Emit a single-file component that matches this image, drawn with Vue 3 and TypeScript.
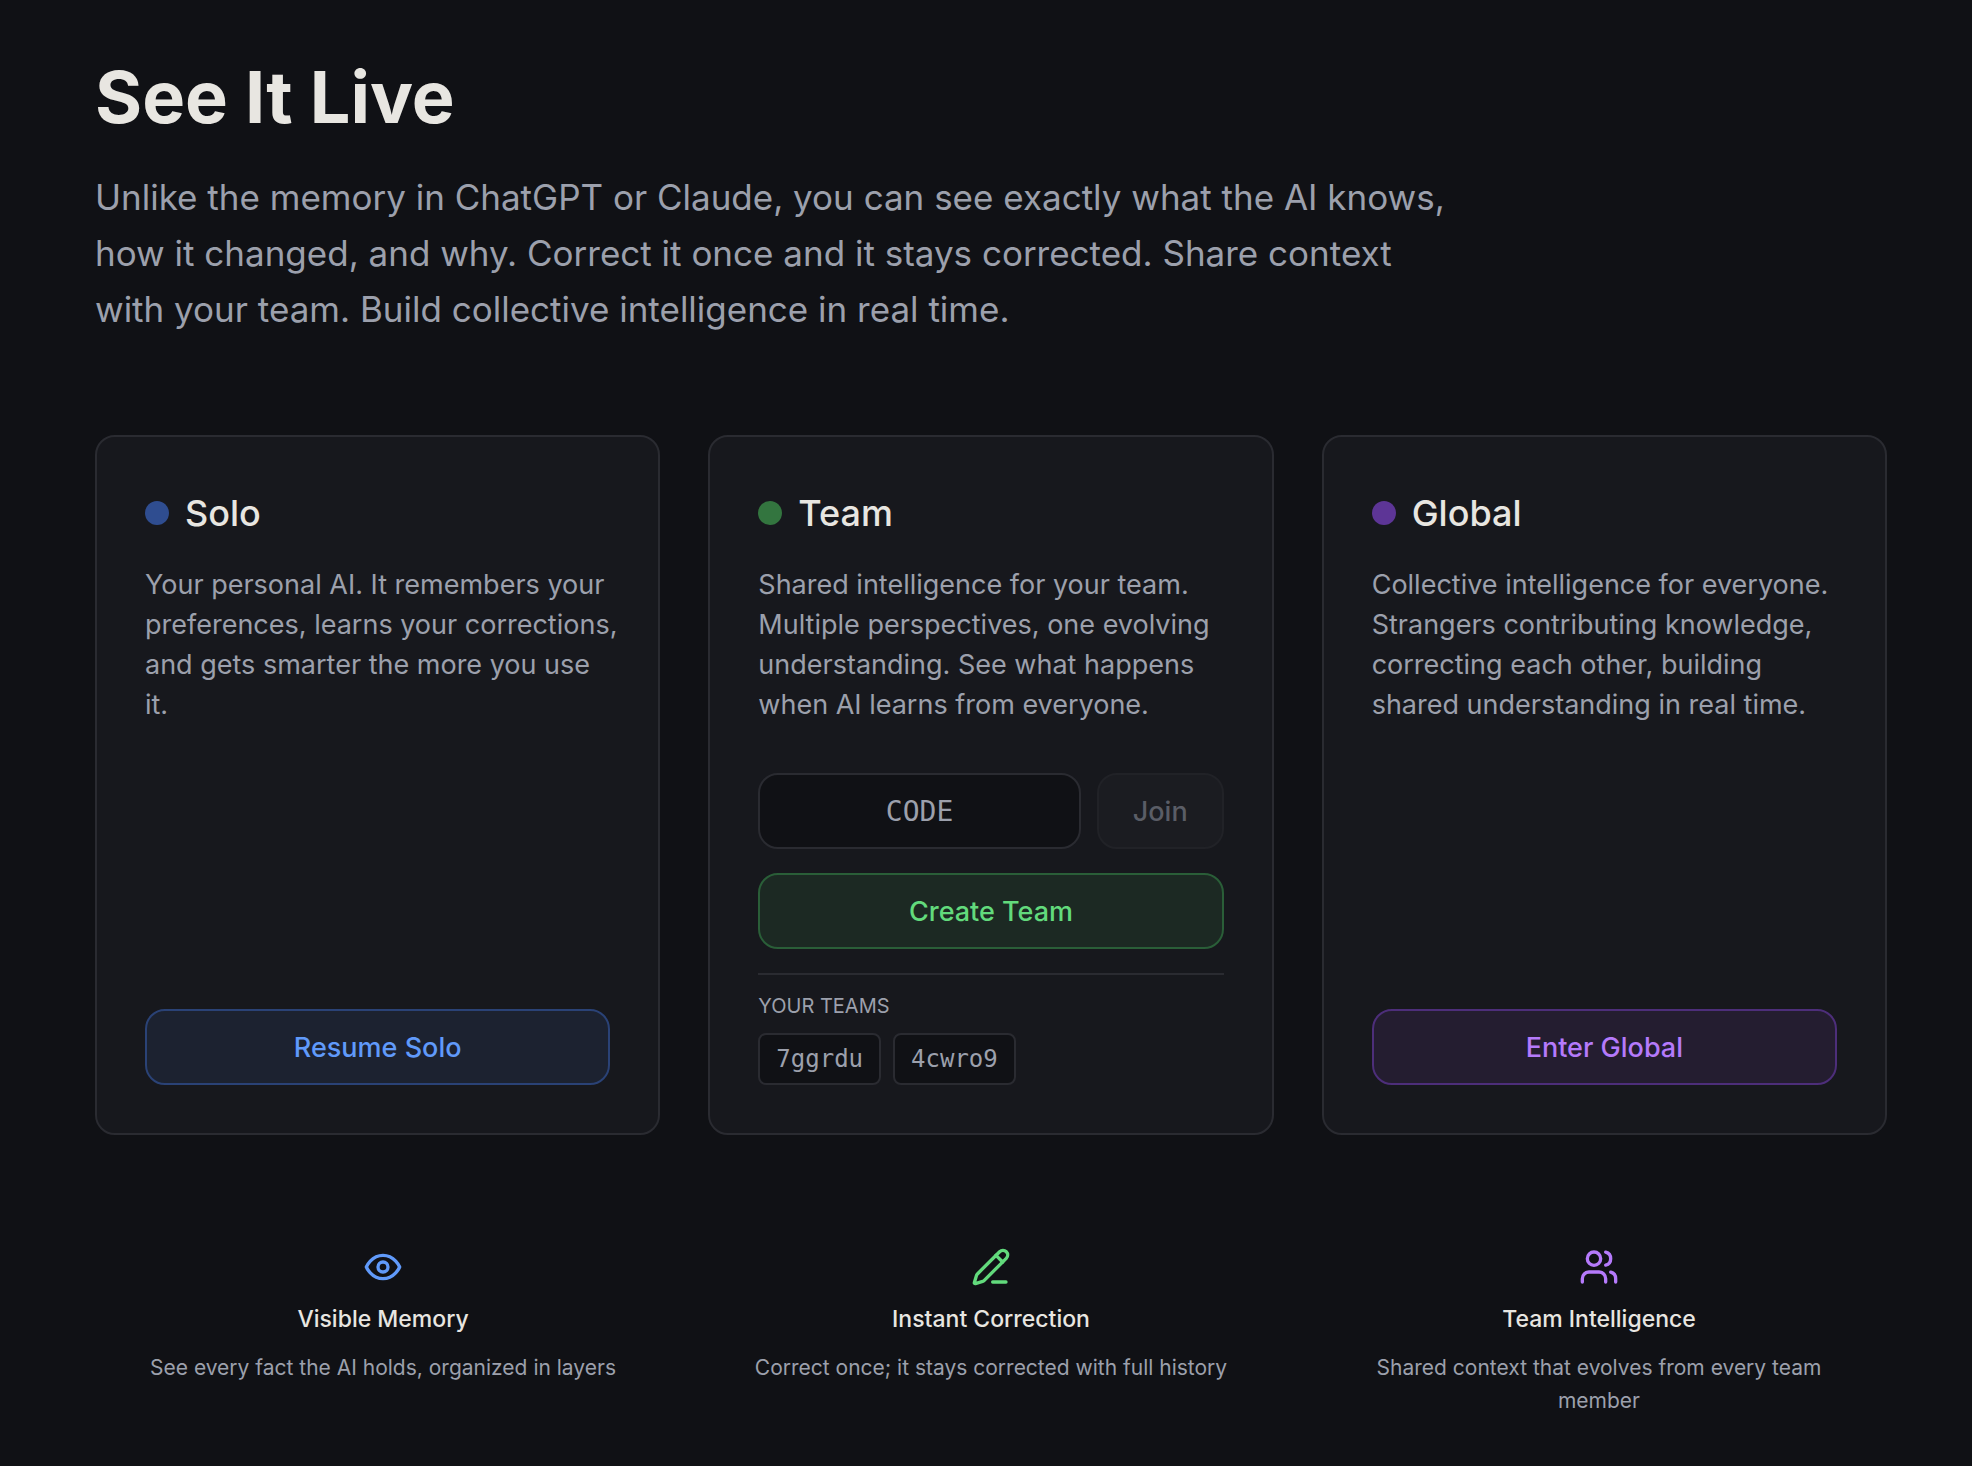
<script setup lang="ts">
import { ref } from 'vue'

interface Feature {
  icon: 'eye' | 'pencil' | 'users'
  tone: string
  title: string
  text: string
}

const code = ref('')
const teams: string[] = ['7ggrdu', '4cwro9']

const features: Feature[] = [
  {
    icon: 'eye',
    tone: 'blue',
    title: 'Visible Memory',
    text: 'See every fact the AI holds, organized in layers',
  },
  {
    icon: 'pencil',
    tone: 'green',
    title: 'Instant Correction',
    text: 'Correct once; it stays corrected with full history',
  },
  {
    icon: 'users',
    tone: 'purple',
    title: 'Team Intelligence',
    text: 'Shared context that evolves from every team member',
  },
]
</script>

<template>
  <main class="page">
    <header class="intro">
      <h1>See It Live</h1>
      <p class="lede">
        Unlike the memory in ChatGPT or Claude, you can see exactly what the AI knows, how it
        changed, and why. Correct it once and it stays corrected. Share context with your team.
        Build collective intelligence in real time.
      </p>
    </header>

    <section class="cards">
      <article class="card blue">
        <h2><span class="dot"></span>Solo</h2>
        <p class="desc">
          Your personal AI. It remembers your preferences, learns your corrections, and gets
          smarter the more you use it.
        </p>
        <div class="actions">
          <button type="button" class="btn tinted">Resume Solo</button>
        </div>
      </article>

      <article class="card green">
        <h2><span class="dot"></span>Team</h2>
        <p class="desc">
          Shared intelligence for your team. Multiple perspectives, one evolving understanding.
          See what happens when AI learns from everyone.
        </p>
        <div class="actions">
          <form class="join" @submit.prevent>
            <input v-model="code" class="code" type="text" placeholder="CODE" aria-label="Team code" />
            <button type="submit" class="btn plain" :disabled="!code">Join</button>
          </form>
          <button type="button" class="btn tinted">Create Team</button>
          <div class="teams">
            <h3>YOUR TEAMS</h3>
            <div class="chips">
              <button v-for="team in teams" :key="team" type="button" class="chip">{{ team }}</button>
            </div>
          </div>
        </div>
      </article>

      <article class="card purple">
        <h2><span class="dot"></span>Global</h2>
        <p class="desc">
          Collective intelligence for everyone. Strangers contributing knowledge, correcting each
          other, building shared understanding in real time.
        </p>
        <div class="actions">
          <button type="button" class="btn tinted">Enter Global</button>
        </div>
      </article>
    </section>

    <section class="features">
      <div v-for="f in features" :key="f.title" class="feature" :class="f.tone">
        <svg class="icon" viewBox="0 0 24 24" aria-hidden="true">
          <template v-if="f.icon === 'eye'">
            <path d="M2 12s3-7 10-7 10 7 10 7-3 7-10 7-10-7-10-7Z" />
            <circle cx="12" cy="12" r="3" />
          </template>
          <template v-else-if="f.icon === 'pencil'">
            <path d="M13 21h8" />
            <path d="m15 5 4 4" />
            <path
              d="M21.174 6.812a1 1 0 0 0-3.986-3.987L3.842 16.174a2 2 0 0 0-.5.83l-1.321 4.352a.5.5 0 0 0 .623.622l4.353-1.32a2 2 0 0 0 .83-.497z"
            />
          </template>
          <template v-else>
            <path d="M16 21v-2a4 4 0 0 0-4-4H6a4 4 0 0 0-4 4v2" />
            <circle cx="9" cy="7" r="4" />
            <path d="M22 21v-2a4 4 0 0 0-3-3.87" />
            <path d="M16 3.13a4 4 0 0 1 0 7.75" />
          </template>
        </svg>
        <h3>{{ f.title }}</h3>
        <p>{{ f.text }}</p>
      </div>
    </section>
  </main>
</template>

<style>
body {
  margin: 0;
  background: #101115;
}
</style>

<style scoped>
* {
  box-sizing: border-box;
}

.page {
  padding: 57px 85px 24px 95px;
  font-family: Inter, "Liberation Sans", sans-serif;
  color: #e8e6e1;
  -webkit-font-smoothing: antialiased;
}

h1,
h2,
h3,
p {
  margin: 0;
}

h1 {
  font-size: 72px;
  line-height: 80px;
  font-weight: 700;
}

.lede {
  max-width: 1354px;
  margin-top: 32px;
  font-size: 35px;
  line-height: 56px;
  color: #9ca0ac;
}

.cards {
  display: grid;
  grid-template-columns: repeat(3, minmax(0, 1fr));
  gap: 48px;
  margin-top: 98px;
}

.card {
  display: flex;
  flex-direction: column;
  padding: 48px;
  border: 2px solid #2a2b31;
  border-radius: 20px;
  background: #17181d;
}

.card h2 {
  display: flex;
  align-items: center;
  gap: 16px;
  font-size: 36px;
  line-height: 56px;
  font-weight: 500;
}

.dot {
  width: 24px;
  height: 24px;
  border-radius: 50%;
  background: var(--dot);
}

.desc {
  margin: 24px -8px 48px 0;
  font-size: 27px;
  line-height: 40px;
  color: #9ca0ac;
}

.actions {
  display: flex;
  flex-direction: column;
  gap: 24px;
  margin-top: auto;
}

.blue {
  --dot: #2f4d90;
  --ink: #609afa;
  --fill: #1c2230;
  --line: #2a4276;
}

.green {
  --dot: #33753f;
  --ink: #62da7c;
  --fill: #1c2923;
  --line: #2a5e38;
}

.purple {
  --dot: #5d3596;
  --ink: #b57afb;
  --fill: #241d30;
  --line: #4d2e7a;
}

.btn {
  height: 76px;
  padding: 0 34px;
  border: 2px solid;
  border-radius: 20px;
  font-family: inherit;
  font-size: 27px;
  font-weight: 500;
}

.tinted {
  border-color: var(--line);
  background: var(--fill);
  color: var(--ink);
}

.plain {
  border-color: #212227;
  background: #1b1c21;
  color: #5a5d66;
}

.join {
  display: flex;
  gap: 16px;
}

.code {
  flex: 1;
  min-width: 0;
  height: 76px;
  padding: 0 24px;
  border: 2px solid #2a2b31;
  border-radius: 20px;
  background: #101115;
  color: #e8e6e1;
  font-family: "DejaVu Sans Mono", monospace;
  font-size: 28px;
  text-align: center;
}

.code::placeholder {
  color: #9ca0ac;
  opacity: 1;
}

.teams {
  padding-top: 16px;
  border-top: 2px solid #2a2b31;
}

.teams h3 {
  font-size: 20px;
  line-height: 30px;
  font-weight: 400;
  color: #9ca0ac;
}

.chips {
  display: flex;
  gap: 12px;
  margin-top: 12px;
}

.chip {
  height: 52px;
  padding: 0 16px;
  border: 2px solid #2a2b31;
  border-radius: 8px;
  background: #101115;
  color: #9ca0ac;
  font-family: "DejaVu Sans Mono", monospace;
  font-size: 24px;
}

.features {
  display: grid;
  grid-template-columns: repeat(3, minmax(0, 1fr));
  gap: 32px;
  margin-top: 80px;
}

.feature {
  display: flex;
  flex-direction: column;
  align-items: center;
  padding: 32px;
  text-align: center;
}

.icon {
  width: 40px;
  height: 40px;
  fill: none;
  stroke: var(--ink);
  stroke-width: 2;
  stroke-linecap: round;
  stroke-linejoin: round;
}

.feature h3 {
  margin-top: 16px;
  font-size: 23px;
  line-height: 32px;
  font-weight: 500;
}

.feature p {
  margin-top: 16px;
  font-size: 21px;
  line-height: 33px;
  color: #9ca0ac;
}
</style>
